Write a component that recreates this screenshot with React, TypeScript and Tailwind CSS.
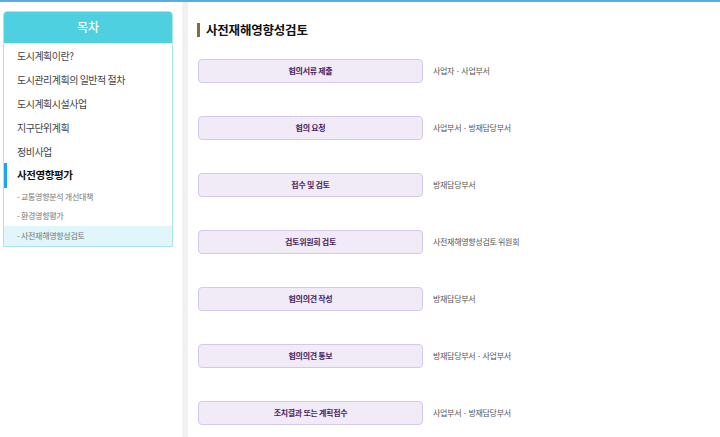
import React from "react";

const menu = [
  "도시계획이란?",
  "도시관리계획의 일반적 절차",
  "도시계획시설사업",
  "지구단위계획",
  "정비사업",
];

const subMenu = ["- 교통영향분석 개선대책", "- 환경영향평가", "- 사전재해영향성검토"];

const steps = [
  { label: "협의서류 제출", who: "사업자 · 사업부서" },
  { label: "협의 요청", who: "사업부서 · 방재담당부서" },
  { label: "접수 및 검토", who: "방재담당부서" },
  { label: "검토위원회 검토", who: "사전재해영향성검토 위원회" },
  { label: "협의의견 작성", who: "방재담당부서" },
  { label: "협의의견 통보", who: "방재담당부서 · 사업부서" },
  { label: "조치결과 또는 계획접수", who: "사업부서 · 방재담당부서" },
];

const font = "font-['Noto_Sans_CJK_KR','Noto_Sans',sans-serif]";

export default function App() {
  return (
    <div
      className={`w-[720px] h-[437px] bg-white border-t-2 border-[#5aaae6] flex overflow-hidden ${font}`}
    >
      <aside className="w-[182px] shrink-0 pl-[3px] pt-[9px]">
        <div className="w-[170px] border border-[#a9e5ee] rounded-t-[4px] overflow-hidden">
          <div className="h-[32px] -mx-px -mt-px bg-[#4fd0e1] rounded-t-[4px] flex items-center justify-center text-white text-[12px] font-medium">
            목차
          </div>
          {menu.map((m) => (
            <div
              key={m}
              className="h-[24px] flex items-center pl-[13px] text-[10px] tracking-[-0.5px] text-[#444]"
            >
              {m}
            </div>
          ))}
          <div className="relative h-[24px] flex items-center pl-[13px] text-[10.5px] tracking-[-0.4px] font-bold text-[#111]">
            <span className="absolute left-[-1px] top-0 h-[25px] w-[4px] bg-[#1aa7ec]" />
            사전영향평가
          </div>
          {subMenu.map((s, i) => (
            <div
              key={s}
              className={`h-[19.5px] flex items-center pl-[13px] text-[8px] tracking-[-0.3px] text-[#777] ${
                i === subMenu.length - 1 ? "bg-[#e0f6fa]" : ""
              }`}
            >
              {s}
            </div>
          ))}
        </div>
      </aside>
      <div className="w-[6px] shrink-0 bg-[#f1f1f1]" />
      <main className="flex-1 pl-[9px] pt-[20px]">
        <div className="h-[16px] flex items-center gap-[6px]">
          <span className="w-[3px] h-[14px] bg-[#8a6a3c]" />
          <h1 className="text-[12.5px] font-semibold text-[#111] tracking-[-0.2px]">
            사전재해영향성검토
          </h1>
        </div>
        <div className="mt-[21px] pl-[1px] flex flex-col gap-[33px]">
          {steps.map((s) => (
            <div key={s.label} className="flex items-center gap-[10px]">
              <div className="w-[225px] h-[24px] rounded-[4px] border border-[#d6c8ea] bg-[#f1ebf8] flex items-center justify-center text-[8px] font-bold tracking-[-0.3px] text-[#4b1f5f]">
                {s.label}
              </div>
              <span className="text-[8px] tracking-[-0.3px] text-[#555]">{s.who}</span>
            </div>
          ))}
        </div>
      </main>
    </div>
  );
}
